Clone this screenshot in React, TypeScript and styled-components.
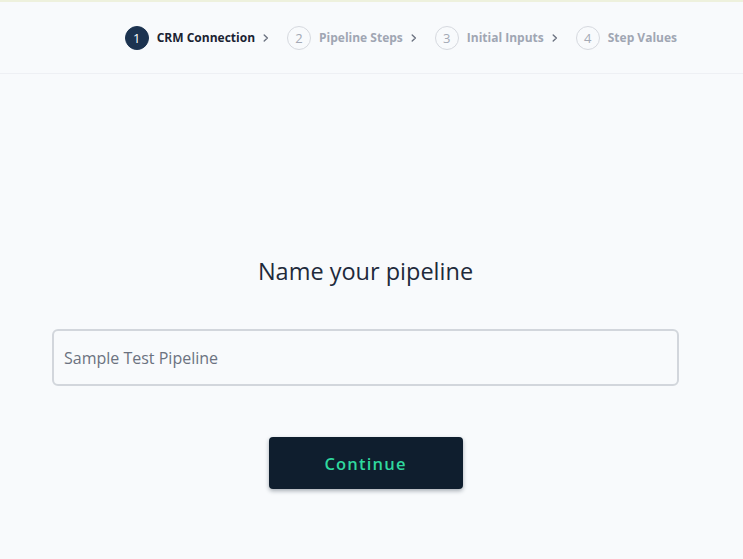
import React, { useState } from 'react';
import styled, { createGlobalStyle } from 'styled-components';

const GlobalStyle = createGlobalStyle`
    html, body {
        margin: 0;
        padding: 0;
        background: #f8fafc;
        font-family: "Open Sans", "Noto Sans", Arial, sans-serif;
    }
    * { box-sizing: border-box; }
`

const STEPS = ["CRM Connection", "Pipeline Steps", "Initial Inputs", "Step Values"]

export default function App() {
    const [name, setName] = useState<string>("Sample Test Pipeline");
    const activeStep = 0;

    return (
        <>
            <GlobalStyle />
            <Page>
                <Header>
                    <Stepper>
                        {STEPS.map((label, i) => (
                            <Step key={label}>
                                <StepNumber active={i === activeStep}>{i + 1}</StepNumber>
                                <StepLabel active={i === activeStep}>{label}</StepLabel>
                                {i < STEPS.length - 1 && (
                                    <Chevron viewBox="0 0 6 8" width="6" height="8">
                                        <path d="M1.2 1 L4.4 4 L1.2 7" fill="none" stroke="currentColor" strokeWidth="1.4" strokeLinecap="round" strokeLinejoin="round" />
                                    </Chevron>
                                )}
                            </Step>
                        ))}
                    </Stepper>
                </Header>

                <Content>
                    <Title>Name your pipeline</Title>
                    <NameInput
                        value={name}
                        onChange={(e) => setName(e.target.value)}
                        autoFocus
                    />
                    <ContinueButton>Continue</ContinueButton>
                </Content>
            </Page>
        </>
    )
}

const Page = styled.div`
    min-height: 559px;
    background: #f8fafc;
    border-top: 2px solid #eef1dd;
`

const Header = styled.div`
    height: 72px;
    display: flex;
    align-items: center;
    justify-content: flex-end;
    padding-right: 66px;
    border-bottom: 1px solid #eef0f4;
`

const Stepper = styled.div`
    display: flex;
    align-items: center;
    gap: 18px;
`

const Step = styled.div`
    display: flex;
    align-items: center;
    gap: 8px;
`

const StepNumber = styled.div<{ active: boolean }>`
    width: 24px;
    height: 24px;
    border-radius: 50%;
    display: flex;
    align-items: center;
    justify-content: center;
    font-size: 13px;
    color: ${p => p.active ? '#ffffff' : '#a3a9b5'};
    background: ${p => p.active ? '#1c3350' : 'transparent'};
    border: 1px solid ${p => p.active ? '#1c3350' : '#d6d9df'};
`

const StepLabel = styled.span<{ active: boolean }>`
    font-size: 12px;
    font-weight: 700;
    color: ${p => p.active ? '#1a2332' : '#a0a6b3'};
`

const Chevron = styled.svg`
    color: #6b7280;
`

const Content = styled.div`
    display: flex;
    flex-direction: column;
    align-items: center;
    padding: 181px 64px 0 52px;
`

const Title = styled.h1`
    margin: 0;
    font-size: 23.5px;
    font-weight: 500;
    color: #1e2a3b;
    line-height: 32px;
`

const NameInput = styled.input`
    margin-top: 42px;
    width: 100%;
    height: 57px;
    padding: 0 10px;
    border: 2px solid #d2d6dc;
    border-radius: 6px;
    background: #f8fafc;
    font-family: "Open Sans", "Noto Sans", Arial, sans-serif;
    font-size: 16px;
    color: #6b7280;
    caret-color: #34d399;
    outline: none;
`

const ContinueButton = styled.button`
    margin-top: 51px;
    width: 194px;
    height: 52px;
    border: none;
    border-radius: 4px;
    background: #0f1e2e;
    box-shadow: 0 2px 4px rgba(15, 30, 46, 0.35);
    color: #2fd89e;
    font-family: "Open Sans", "Noto Sans", Arial, sans-serif;
    font-size: 16.5px;
    font-weight: 600;
    letter-spacing: 1.2px;
    cursor: pointer;
`
